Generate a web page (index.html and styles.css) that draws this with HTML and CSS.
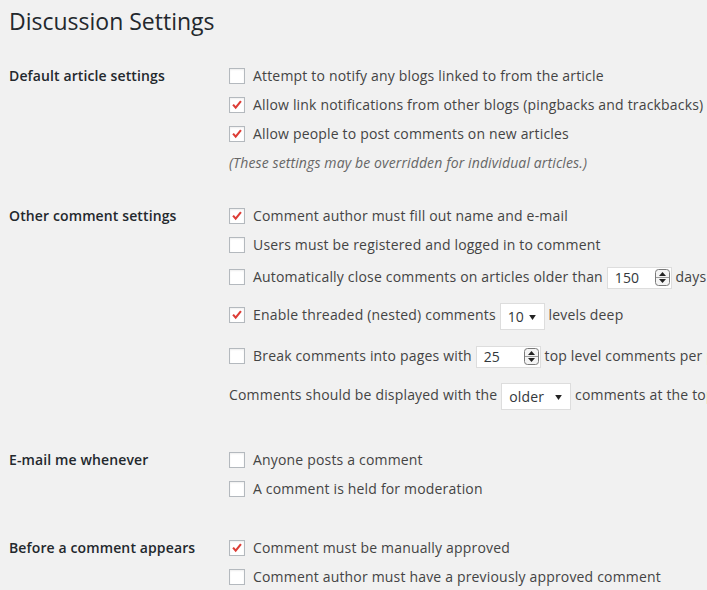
FILE: index.html
```html
<!DOCTYPE html>
<html lang="en">
<head>
  <meta charset="UTF-8">
  <meta name="viewport" content="width=device-width, initial-scale=1.0">
  <title>Discussion Settings</title>
  <link rel="stylesheet" href="styles.css">
</head>
<body>
  <div class="wrap">
    <h1>Discussion Settings</h1>

    <div class="section first">
      <div class="th">Default article settings</div>
      <div class="td">
        <div class="line"><span class="cb"></span>Attempt to notify any blogs linked to from the article</div>
        <div class="line"><span class="cb on"><svg viewBox="0 0 16 16"><polyline points="3.5,7.5 6.5,11 12.5,3.5"/></svg></span>Allow link notifications from other blogs (pingbacks and trackbacks)</div>
        <div class="line"><span class="cb on"><svg viewBox="0 0 16 16"><polyline points="3.5,7.5 6.5,11 12.5,3.5"/></svg></span>Allow people to post comments on new articles</div>
        <div class="line desc">(These settings may be overridden for individual articles.)</div>
      </div>
    </div>

    <div class="section second">
      <div class="th">Other comment settings</div>
      <div class="td">
        <div class="line"><span class="cb on"><svg viewBox="0 0 16 16"><polyline points="3.5,7.5 6.5,11 12.5,3.5"/></svg></span>Comment author must fill out name and e-mail</div>
        <div class="line"><span class="cb"></span>Users must be registered and logged in to comment</div>
        <div class="line l3"><span class="cb"></span>Automatically close comments on articles older than <span class="num">150<svg class="spin" viewBox="0 0 15 17"><rect x="0.5" y="0.5" width="14" height="16" rx="3"/><line x1="1" y1="8.5" x2="14" y2="8.5"/><polygon points="7.5,3 11,7 4,7"/><polygon points="7.5,14 11,10 4,10"/></svg></span> days</div>
        <div class="line l4"><span class="cb on"><svg viewBox="0 0 16 16"><polyline points="3.5,7.5 6.5,11 12.5,3.5"/></svg></span>Enable threaded (nested) comments <span class="sel short">10<svg class="arrow" viewBox="0 0 8 6"><polygon points="0,0 8,0 4,6"/></svg></span> levels deep</div>
        <div class="line l5"><span class="cb"></span>Break comments into pages with <span class="num">25<svg class="spin" viewBox="0 0 15 17"><rect x="0.5" y="0.5" width="14" height="16" rx="3"/><line x1="1" y1="8.5" x2="14" y2="8.5"/><polygon points="7.5,3 11,7 4,7"/><polygon points="7.5,14 11,10 4,10"/></svg></span> top level comments per page</div>
        <div class="line l6">Comments should be displayed with the <span class="sel wide">older<svg class="arrow" viewBox="0 0 8 6"><polygon points="0,0 8,0 4,6"/></svg></span> comments at the top</div>
      </div>
    </div>

    <div class="section third">
      <div class="th">E-mail me whenever</div>
      <div class="td">
        <div class="line"><span class="cb"></span>Anyone posts a comment</div>
        <div class="line"><span class="cb"></span>A comment is held for moderation</div>
      </div>
    </div>

    <div class="section fourth">
      <div class="th">Before a comment appears</div>
      <div class="td">
        <div class="line"><span class="cb on"><svg viewBox="0 0 16 16"><polyline points="3.5,7.5 6.5,11 12.5,3.5"/></svg></span>Comment must be manually approved</div>
        <div class="line"><span class="cb"></span>Comment author must have a previously approved comment</div>
      </div>
    </div>
  </div>
</body>
</html>
```

FILE: styles.css
```css
html, body { margin: 0; overflow: hidden; }
body { background: #f1f1f1; font-family: "Open Sans", "Liberation Sans", sans-serif; font-size: 14px; color: #444; letter-spacing: 0.18px; }
.wrap { padding-left: 9px; width: 1000px; }
h1 { margin: 0; padding-top: 7px; font-size: 23px; font-weight: 400; line-height: 29px; color: #23282d; letter-spacing: 0; }

.section { display: grid; grid-template-columns: 220px 1fr; }
.section.first { margin-top: 25px; }
.section.second { margin-top: 24px; }
.section.third { margin-top: 36px; }
.section.fourth { margin-top: 30px; }
.th { font-weight: 600; color: #23282d; line-height: 29px; letter-spacing: 0.12px; }

.line { height: 29px; line-height: 29px; white-space: nowrap; }
.l3 { margin-top: 3px; }
.l4 { margin-top: 9px; }
.l5 { margin-top: 12px; }
.l6 { margin-top: 10px; }
.desc { font-style: italic; color: #666; letter-spacing: 0.12px; }

.cb { display: inline-block; box-sizing: border-box; width: 16px; height: 16px; margin-right: 8px; vertical-align: -3px; border: 1px solid #b4b9be; background: #fff; box-shadow: inset 0 1px 2px rgba(0,0,0,.07); }
.cb svg { display: block; width: 14px; height: 14px; fill: none; stroke: #dd3d36; stroke-width: 2.4; }

.num, .sel { display: inline-block; position: relative; box-sizing: border-box; vertical-align: middle; background: #fff; border: 1px solid #ddd; padding-left: 7px; color: #32373c; text-align: left; }
.num { width: 65px; height: 22px; line-height: 20px; }
.spin { position: absolute; right: 1px; top: 1px; width: 15px; height: 17px; }
.spin rect { fill: #f4f4f4; stroke: #7a7a7a; }
.spin line { stroke: #9a9a9a; }
.spin polygon { fill: #222; }
.sel { height: 27px; line-height: 25px; }
.sel.short { width: 45px; }
.sel.wide { width: 70px; }
.arrow { position: absolute; right: 8px; top: 11px; width: 7px; height: 5px; fill: #222; }
```
